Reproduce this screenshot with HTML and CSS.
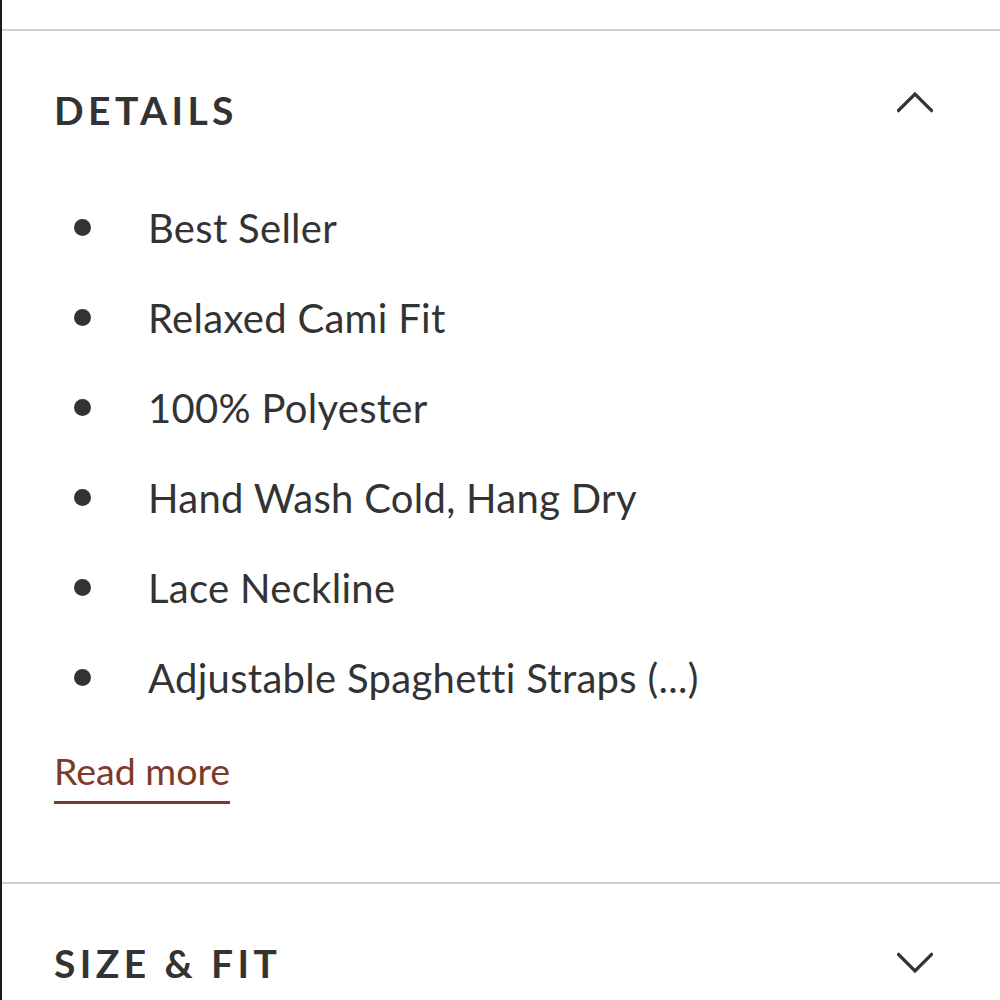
FILE: index.html
```html
<!DOCTYPE html>
<html lang="en">
<head>
<meta charset="utf-8">
<title>Details</title>
<link rel="stylesheet" href="styles.css">
</head>
<body>
<div class="page">
  <section class="panel panel--open">
    <div class="panel__head">
      <h2 class="panel__title">DETAILS</h2>
      <svg class="chev" width="36" height="38" viewBox="0 0 36 38" aria-hidden="true">
        <polyline points="1.5,23.5 18,7 34.5,23.5" fill="none" stroke="#333" stroke-width="3.2" stroke-linecap="square"/>
      </svg>
    </div>
    <ul class="list">
      <li>Best Seller</li>
      <li>Relaxed Cami Fit</li>
      <li>100% Polyester</li>
      <li>Hand Wash Cold, Hang Dry</li>
      <li>Lace Neckline</li>
      <li>Adjustable Spaghetti Straps (...)</li>
    </ul>
    <a class="more" href="#">Read more</a>
  </section>
  <section class="panel">
    <div class="panel__head">
      <h2 class="panel__title">SIZE &amp; FIT</h2>
      <svg class="chev" width="36" height="38" viewBox="0 0 36 38" aria-hidden="true">
        <polyline points="1.5,14.5 18,31 34.5,14.5" fill="none" stroke="#333" stroke-width="3.2" stroke-linecap="square"/>
      </svg>
    </div>
  </section>
</div>
</body>
</html>
```
FILE: styles.css
```css
html, body {
  margin: 0;
  padding: 0;
  background: #fff;
}
body {
  font-family: Lato, "Open Sans", sans-serif;
  color: #333;
}
.page {
  border-left: 2px solid #1a1a1a;
  min-height: 1000px;
  padding-top: 29px;
  box-sizing: border-box;
}
.panel {
  border-top: 2px solid #cfcfcf;
  padding: 56px 67px 0 52px;
}
.panel--open {
  padding-bottom: 78px;
}
.panel__head {
  display: flex;
  justify-content: space-between;
  align-items: flex-start;
}
.panel__title {
  margin: 0;
  font-size: 39px;
  line-height: 46px;
  font-weight: 700;
  letter-spacing: 4.4px;
}
.chev {
  display: block;
}
.list {
  list-style: none;
  margin: 49.5px 0 0;
  padding: 0;
}
.list li {
  position: relative;
  font-size: 40px;
  line-height: 90px;
  letter-spacing: 0.3px;
  padding-left: 94px;
}
.list li::before {
  content: "";
  position: absolute;
  left: 20px;
  top: 36px;
  width: 17px;
  height: 17px;
  border-radius: 50%;
  background: #333;
}
.more {
  display: inline-block;
  margin-top: 25px;
  font-size: 37.5px;
  line-height: 45px;
  color: #7b3b28;
  text-decoration: none;
  padding-bottom: 8px;
  border-bottom: 3px solid #7b3b28;
}
```
